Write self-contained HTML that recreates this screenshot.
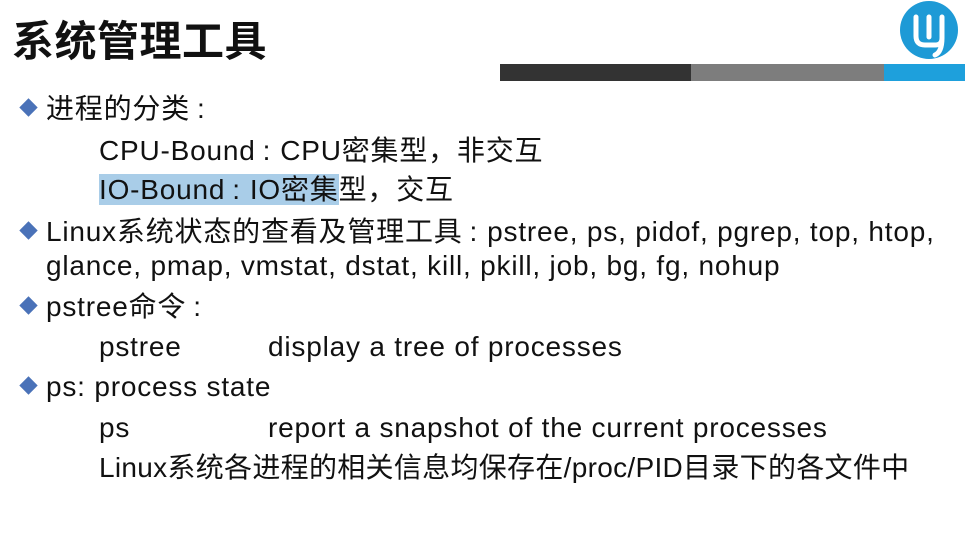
<!DOCTYPE html>
<html><head><meta charset="utf-8"><style>
html,body{margin:0;padding:0;background:#fff;width:965px;height:534px;overflow:hidden}
body{position:relative;font-family:"Liberation Sans","Noto Sans CJK SC",sans-serif;color:#111}
.t{position:absolute;left:12px;top:8px;font-size:42px;font-weight:bold;font-family:"Noto Sans CJK SC","WenQuanYi Zen Hei",sans-serif;letter-spacing:0.5px}
.l{position:absolute;font-size:28px;line-height:30px;white-space:nowrap;letter-spacing:0.8px}
.c{padding:0 9px 0 7px}
.b{position:absolute;width:13px;height:13px;background:#4a72b8;transform:rotate(45deg)}
.hl{background:#a9cde8}
</style></head><body>
<div class="t">系统管理工具</div>
<svg style="position:absolute;left:899px;top:0" width="62" height="62" viewBox="0 0 62 62">
<circle cx="30" cy="30" r="29" fill="#1e9ad6"/>
<path d="M17 17 V36 Q17 45 26 45 H36 Q43 45 43 38 V17 M30 17 V37 M43 38 Q43 52 36 55" fill="none" stroke="#fff" stroke-width="5" stroke-linecap="round"/>
</svg>
<div style="position:absolute;left:500px;top:64px;width:191px;height:17px;background:#333"></div>
<div style="position:absolute;left:691px;top:64px;width:193px;height:17px;background:#7d7d7d"></div>
<div style="position:absolute;left:884px;top:64px;width:81px;height:17px;background:#1ea0dc"></div>

<div class="b" style="left:22px;top:101px"></div>
<div class="l" style="left:46px;top:94px">进程的分类<span class="c">:</span></div>
<div class="l" style="left:99px;top:136px">CPU-Bound<span class="c">:</span>CPU密集型，非交互</div>
<div class="l" style="left:99px;top:175px"><span class="hl">IO-Bound<span class="c">:</span>IO密集</span>型，交互</div>
<div class="b" style="left:22px;top:224px"></div>
<div class="l" style="left:46px;top:217px">Linux系统状态的查看及管理工具<span class="c">:</span>pstree, ps, pidof, pgrep, top, htop,</div>
<div class="l" style="left:46px;top:251px">glance, pmap, vmstat, dstat, kill, pkill, job, bg, fg, nohup</div>
<div class="b" style="left:22px;top:299px"></div>
<div class="l" style="left:46px;top:292px">pstree命令<span class="c">:</span></div>
<div class="l" style="left:99px;top:332px">pstree</div>
<div class="l" style="left:268px;top:332px">display a tree of processes</div>
<div class="b" style="left:22px;top:379px"></div>
<div class="l" style="left:46px;top:372px">ps: process state</div>
<div class="l" style="left:99px;top:413px">ps</div>
<div class="l" style="left:268px;top:413px">report a snapshot of the current processes</div>
<div class="l" style="left:99px;top:453px;letter-spacing:0.3px">Linux系统各进程的相关信息均保存在/proc/PID目录下的各文件中</div>
</body></html>
